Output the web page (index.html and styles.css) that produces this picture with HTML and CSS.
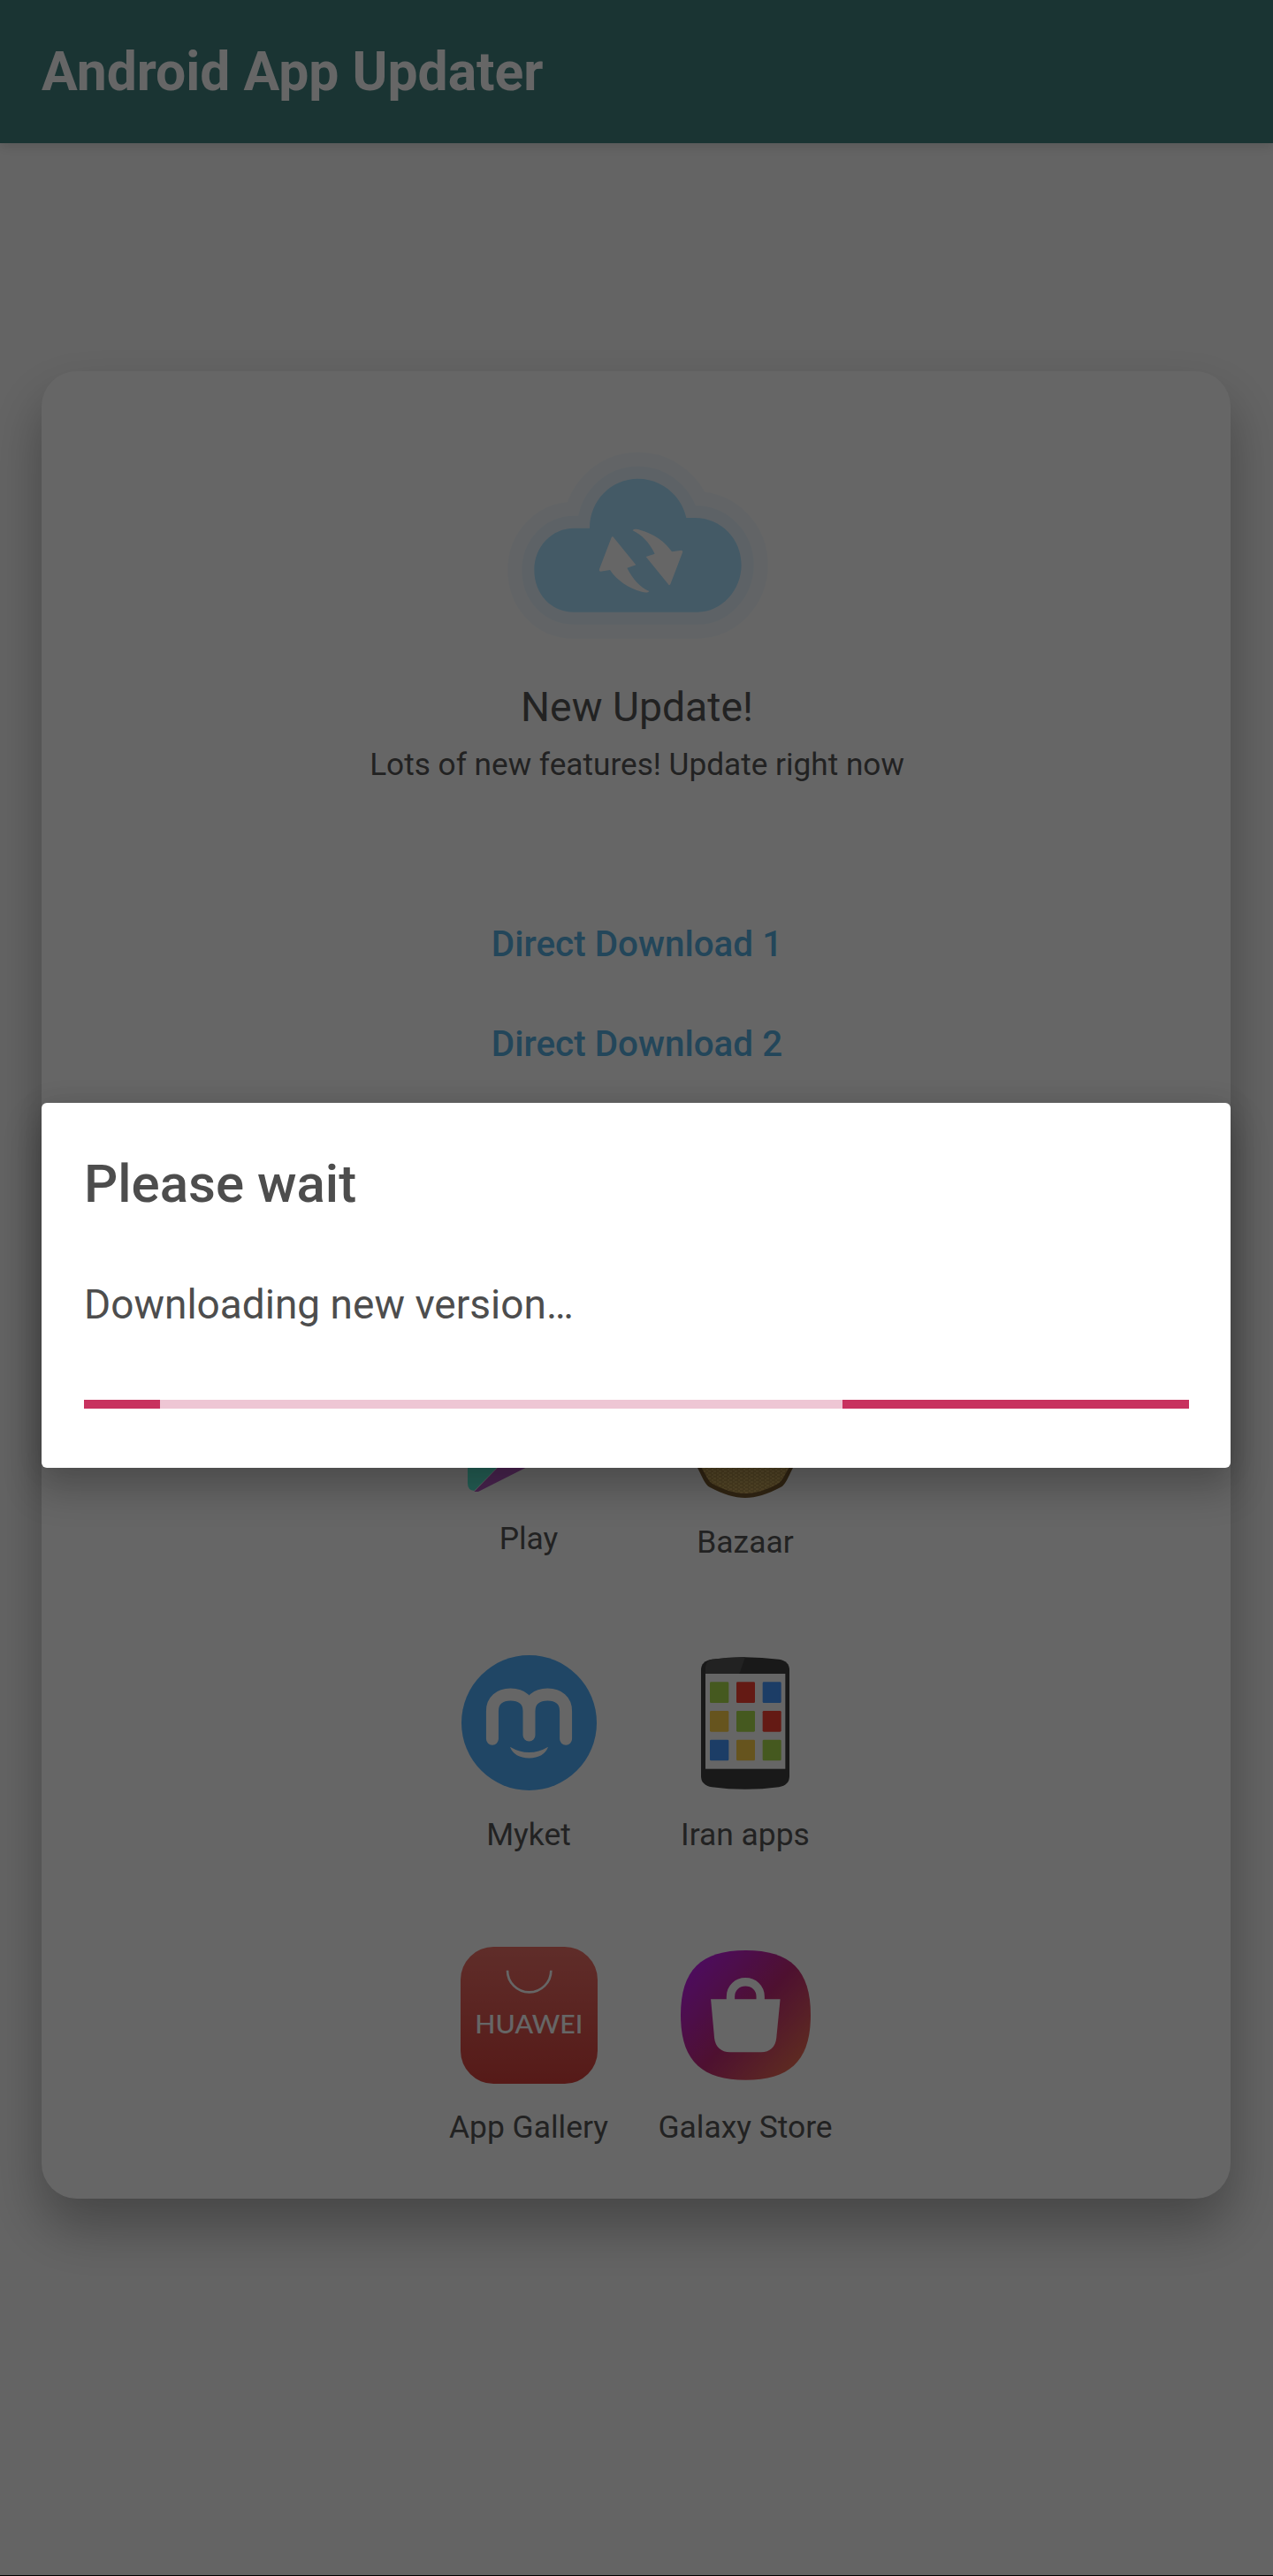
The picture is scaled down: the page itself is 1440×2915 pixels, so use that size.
FILE: index.html
```html
<!DOCTYPE html>
<html lang="en">
<head>
<meta charset="utf-8">
<title>Android App Updater</title>
<link rel="stylesheet" href="styles.css">
</head>
<body>
<div class="page">
  <header class="appbar"><h1 class="appbar-title">Android App Updater</h1></header>
  <main class="card">
    <svg class="cloud" viewBox="0 0 1080 720" aria-hidden="true">
      <path class="cloud-glow-outer" d="M325 578C245 578 190 515 190 435C190 355 250 293 325 293H378C378 200 450 125 542 125C625 125 690 185 706 258H735C825 258 893 330 893 418C893 505 825 578 745 578Z"/>
      <path class="cloud-glow-inner" d="M325 578C245 578 190 515 190 435C190 355 250 293 325 293H378C378 200 450 125 542 125C625 125 690 185 706 258H735C825 258 893 330 893 418C893 505 825 578 745 578Z"/>
      <path class="cloud-body" d="M325 578C245 578 190 515 190 435C190 355 250 293 325 293H378C378 200 450 125 542 125C625 125 690 185 706 258H735C825 258 893 330 893 418C893 505 825 578 745 578Z"/>
      <path class="cloud-arrow" d="M457 322L535 418L505 428C525 468 550 493 580 507C576 513 565 512 555 509C510 497 470 470 447 435L414 440Q409 438 411 432L452 325Q454 321 457 322Z"/>
      <path class="cloud-arrow" transform="rotate(180 552 404)" d="M457 322L535 418L505 428C525 468 550 493 580 507C576 513 565 512 555 509C510 497 470 470 447 435L414 440Q409 438 411 432L452 325Q454 321 457 322Z"/>
    </svg>
    <h2 class="update-title">New Update!</h2>
    <p class="update-text">Lots of new features! Update right now</p>
    <a class="direct direct-first" href="#">Direct Download 1</a>
    <a class="direct direct-second" href="#">Direct Download 2</a>
    <div class="stores">
      <div class="store">
        <div class="store-icon store-icon-play">
          <svg class="icon-play" viewBox="0 0 150 150" aria-hidden="true">
            <path class="play-teal" d="M0 6Q0 0 6 0L78 78L8 149Q0 148 0 140Z"/>
            <path class="play-purple" d="M78 78L112 100L13 150H8Z"/>
            <path class="play-blue" d="M6 0L112 56L78 78Z"/>
            <path class="play-yellow" d="M112 56L146 72Q150 76 146 80L112 100L78 78Z"/>
          </svg>
        </div>
        <span class="store-label store-label-raised">Play</span>
      </div>
      <div class="store">
        <div class="store-icon">
          <svg class="icon-bazaar" viewBox="0 0 120 153" aria-hidden="true">
            <defs>
              <pattern id="weave" width="6" height="4" patternUnits="userSpaceOnUse">
                <rect width="6" height="4" fill="#d8b568"/>
                <path d="M0 1H4M3 3H6" stroke="#a68544" stroke-width="1"/>
              </pattern>
            </defs>
            <path class="bazaar-rim" d="M0 60H120L114 119C108 130 106 138 100 141C85 149 72 153 60 153C48 153 35 149 20 141C14 138 12 130 6 119Z"/>
            <path class="bazaar-weave" d="M4 60H116L110 118C104 128 102 134 97 137C84 144 72 148 60 148C48 148 36 144 23 137C18 134 16 128 10 118Z"/>
          </svg>
        </div>
        <span class="store-label">Bazaar</span>
      </div>
      <div class="store">
        <div class="store-icon">
          <svg class="icon-myket" viewBox="125 700 460 460" aria-hidden="true">
            <circle class="myket-disc" cx="355" cy="930" r="230"/>
            <path class="myket-m" d="M230 985V890C230 855 255 834 292 834C330 834 355 855 355 890V972M355 890C355 855 380 834 418 834C455 834 480 855 480 890V985"/>
            <path class="myket-smile" d="M290 1012Q355 1050 420 1012Q405 1050 355 1050Q305 1050 290 1012Z"/>
          </svg>
        </div>
        <span class="store-label">Myket</span>
      </div>
      <div class="store">
        <div class="store-icon">
          <svg class="icon-iran" viewBox="938 705 300 450" aria-hidden="true">
            <path class="iran-body" d="M975 713Q1088 698 1202 713Q1238 718 1238 750V1110Q1238 1140 1202 1147Q1088 1162 975 1147Q938 1140 938 1110V750Q938 718 975 713Z"/>
            <path class="iran-sheen" d="M975 713Q1030 705 1088 705L1068 762H953V740Q955 718 975 713Z"/>
            <rect class="iran-screen" x="953" y="762" width="271" height="323"/>
            <rect class="tile-green" x="968" y="790" width="64" height="71" rx="4"/>
            <rect class="tile-red" x="1058" y="790" width="63" height="71" rx="4"/>
            <rect class="tile-blue" x="1147" y="790" width="63" height="71" rx="4"/>
            <rect class="tile-yellow" x="968" y="888" width="64" height="71" rx="4"/>
            <rect class="tile-green" x="1058" y="888" width="63" height="71" rx="4"/>
            <rect class="tile-red" x="1147" y="888" width="63" height="71" rx="4"/>
            <rect class="tile-blue" x="968" y="986" width="64" height="71" rx="4"/>
            <rect class="tile-yellow" x="1058" y="986" width="63" height="71" rx="4"/>
            <rect class="tile-green" x="1147" y="986" width="63" height="71" rx="4"/>
          </svg>
        </div>
        <span class="store-label">Iran apps</span>
      </div>
      <div class="store">
        <div class="store-icon">
          <svg class="icon-huawei" viewBox="120 100 465 465" aria-hidden="true">
            <defs>
              <linearGradient id="huaweiFill" x1="0" y1="0" x2="0" y2="1">
                <stop offset="0" stop-color="#ee7168"/>
                <stop offset="1" stop-color="#d6423d"/>
              </linearGradient>
            </defs>
            <rect x="120" y="100" width="465" height="465" rx="112" fill="url(#huaweiFill)"/>
            <path class="huawei-handle" d="M279 180A74 74 0 0 0 427 180"/>
            <text class="huawei-word" x="352" y="394" text-anchor="middle" textLength="366" lengthAdjust="spacingAndGlyphs">HUAWEI</text>
          </svg>
        </div>
        <span class="store-label">App Gallery</span>
      </div>
      <div class="store">
        <div class="store-icon">
          <svg class="icon-galaxy" viewBox="868 113 440 440" aria-hidden="true">
            <defs>
              <linearGradient id="galaxyFill" x1="0" y1="0.25" x2="0.85" y2="1">
                <stop offset="0" stop-color="#c01fe8"/>
                <stop offset="0.5" stop-color="#c22a78"/>
                <stop offset="1" stop-color="#ee7050"/>
              </linearGradient>
            </defs>
            <path fill="url(#galaxyFill)" d="M1088 113C1240 113 1308 180 1308 332C1308 485 1240 552 1088 552C937 552 868 485 868 332C868 180 937 113 1088 113Z"/>
            <path class="galaxy-bag" d="M970 278H1205L1192 410C1189 440 1170 458 1140 458H1035C1005 458 985 440 982 410Z"/>
            <path class="galaxy-handle" d="M1037 282V270C1037 240 1060 220 1087 220C1115 220 1138 240 1138 270V282"/>
          </svg>
        </div>
        <span class="store-label">Galaxy Store</span>
      </div>
    </div>
  </main>
  <div class="scrim"></div>
  <section class="dialog">
    <h3 class="dialog-title">Please wait</h3>
    <p class="dialog-text">Downloading new version…</p>
    <div class="progress">
      <span class="progress-bar progress-start"></span>
      <span class="progress-track"></span>
      <span class="progress-bar progress-end"></span>
    </div>
  </section>
</div>
</body>
</html>
```
FILE: styles.css
```css
* { box-sizing: border-box; }
html { background: #000; }
body {
  margin: 0;
  font-family: Roboto, "Noto Sans", sans-serif;
}
.page {
  position: relative;
  height: 2914px;
  background: #fafafa;
  overflow: hidden;
}
.appbar {
  height: 162px;
  background: #418280;
  padding: 0 47px;
  display: flex;
  align-items: center;
  box-shadow: 0 4px 12px rgba(0,0,0,.12);
}
.appbar-title {
  margin: 0;
  font-size: 60.6px;
  font-weight: 700;
  color: #fff;
}
.card {
  margin: 258px 48px 0 47px;
  height: 2068px;
  padding: 80px 0 0 2px;
  background: #fff;
  border-radius: 40px;
  box-shadow: 0 32px 60px rgba(0,0,0,.3);
  display: flex;
  flex-direction: column;
  align-items: center;
}
.cloud { display: block; width: 360px; height: 240px; flex: none; }
.cloud-body { fill: #aae1ff; }
.cloud-arrow { fill: #fff; }
.cloud-glow-inner, .cloud-glow-outer {
  fill: #aae1ff;
  stroke: #aae1ff;
  stroke-linejoin: round;
}
.cloud-glow-inner { stroke-width: 84px; opacity: .16; }
.cloud-glow-outer { stroke-width: 180px; opacity: .1; }
.update-title {
  margin: 30px 0 0;
  font-size: 46.3px;
  line-height: 60px;
  font-weight: 400;
  color: #555;
}
.update-text {
  margin: 13px 0 0;
  font-size: 35.2px;
  line-height: 44px;
  color: #555;
}
.direct {
  font-size: 40.4px;
  line-height: 50px;
  font-weight: 500;
  color: #58afe1;
  text-decoration: none;
}
.direct-first { margin-top: 157px; }
.direct-second { margin-top: 63px; }
.stores {
  margin-top: 335px;
  display: grid;
  grid-template-columns: 245px 245px;
  row-gap: 105px;
}
.store {
  display: flex;
  flex-direction: column;
  align-items: center;
}
.store-icon {
  height: 153px;
  display: flex;
  align-items: center;
  justify-content: center;
}
.store-icon-play { justify-content: flex-start; width: 138px; }
.store-label {
  margin-top: 27px;
  font-size: 35.4px;
  line-height: 46px;
  color: #555;
  white-space: nowrap;
}
.store-label-raised { margin-top: 23px; }
.icon-play { display: block; width: 150px; height: 150px; }
.play-teal { fill: #5cf0d8; }
.play-purple { fill: #b95bc8; }
.play-blue { fill: #57c7f0; }
.play-yellow { fill: #ffd24b; }
.icon-bazaar { display: block; width: 120px; height: 153px; }
.bazaar-rim { fill: #7a5c30; }
.bazaar-weave { fill: url(#weave); }
.icon-myket { display: block; width: 153px; height: 153px; }
.myket-disc { fill: #50affc; }
.myket-m { fill: none; stroke: #fff; stroke-width: 42px; stroke-linecap: round; }
.myket-smile { fill: #fff; }
.icon-iran { display: block; width: 100px; height: 150px; }
.iran-body { fill: #404040; }
.iran-sheen { fill: #555; }
.iran-screen { fill: #fff; }
.tile-green { fill: #acde4e; }
.tile-red { fill: #fa4132; }
.tile-blue { fill: #4698ff; }
.tile-yellow { fill: #ffd24b; }
.icon-huawei { display: block; width: 155px; height: 155px; }
.huawei-handle { fill: none; stroke: #fff; stroke-width: 8px; }
.huawei-word { fill: #fff; font-family: Lato, sans-serif; font-size: 84px; font-weight: 500; }
.icon-galaxy { display: block; width: 147px; height: 147px; }
.galaxy-bag { fill: #fff; }
.galaxy-handle { fill: none; stroke: #fff; stroke-width: 28px; }
.scrim {
  position: absolute;
  inset: 0;
  background: rgba(0,0,0,.6);
}
.dialog {
  position: absolute;
  top: 1248px;
  left: 47px;
  width: 1345px;
  height: 413px;
  padding: 0 47px 0 48px;
  background: #fff;
  border-radius: 6px;
  box-shadow: 0 24px 40px 4px rgba(0,0,0,.2), 0 0 30px rgba(0,0,0,.1);
  display: flex;
  flex-direction: column;
}
.dialog-title {
  margin: 55px 0 0;
  font-size: 60px;
  line-height: 74px;
  font-weight: 500;
  color: #4d4d4d;
}
.dialog-text {
  margin: 71px 0 0;
  font-size: 46px;
  line-height: 56px;
  color: #4d4d4d;
}
.progress {
  margin-top: 80px;
  display: flex;
  height: 10px;
}
.progress-bar { background: #c8325f; }
.progress-start { width: 86px; }
.progress-track { width: 772px; background: #eec6d4; }
.progress-end { flex: 1; }
```
